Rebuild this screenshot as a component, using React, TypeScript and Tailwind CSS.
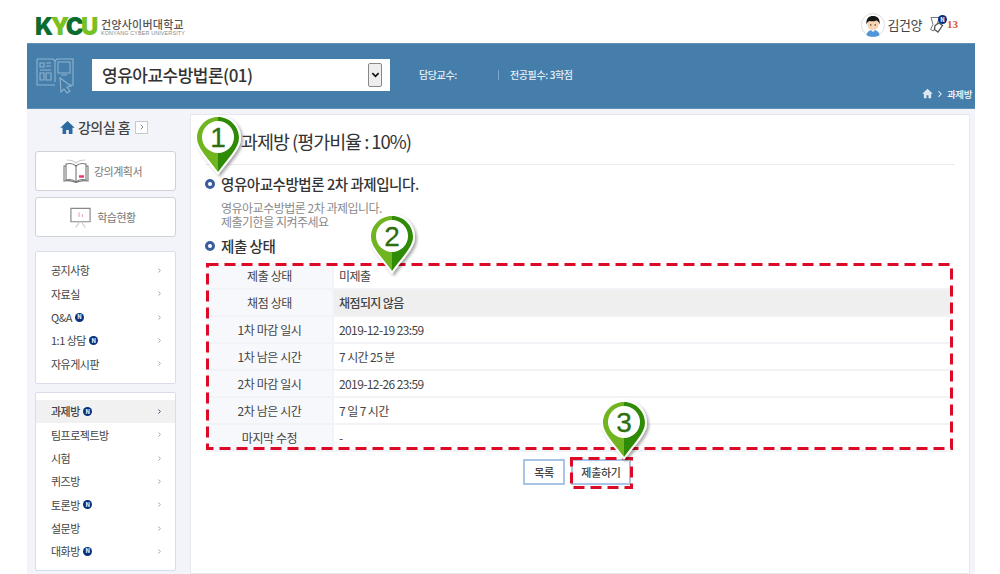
import { ChevronRight } from "lucide-react";

const boardMenu = [
  { label: "공지사항" },
  { label: "자료실" },
  { label: "Q&A", isNew: true },
  { label: "1:1 상담", isNew: true },
  { label: "자유게시판" },
];

const studyMenu = [
  { label: "과제방", isNew: true, active: true },
  { label: "팀프로젝트방" },
  { label: "시험" },
  { label: "퀴즈방" },
  { label: "토론방", isNew: true },
  { label: "설문방" },
  { label: "대화방", isNew: true },
];

const statusRows = [
  { label: "제출 상태", value: "미제출" },
  { label: "채점 상태", value: "채점되지 않음", strong: true },
  { label: "1차 마감 일시", value: "2019-12-19 23:59" },
  { label: "1차 남은 시간", value: "7 시간 25 분" },
  { label: "2차 마감 일시", value: "2019-12-26 23:59" },
  { label: "2차 남은 시간", value: "7 일 7 시간" },
  { label: "마지막 수정", value: "-" },
];

const NewBadge = () => (
  <span className="ml-[3px] flex h-[9px] w-[9px] items-center justify-center rounded-full bg-[#0b2f7d] text-[6px] leading-none font-bold text-white">
    N
  </span>
);

const HomeIcon = ({ className }: { className: string }) => (
  <svg viewBox="0 0 16 16" className={className} fill="currentColor">
    <path d="M8 1 0.3 8.2h2.4V15h3.9v-4.4h2.8V15h3.900V8.200h2.400z" />
  </svg>
);

// map pin used for the numbered callouts
const Pin = ({ n, id, className }: { n: number; id: string; className: string }) => (
  <svg viewBox="0 0 52 66" className={`absolute z-20 h-[66px] w-[52px] ${className}`}>
    <defs>
      <filter id={id} x="-20%" y="-20%" width="150%" height="150%">
        <feDropShadow dx="2" dy="2" stdDeviation="1.5" floodColor="#000" floodOpacity="0.35" />
      </filter>
    </defs>
    <path
      d="M25 2C12 2 2 12 2 25c0 11 12 22 23 37C36 47 48 36 48 25 48 12 38 2 25 2z"
      fill="#fff"
      filter={`url(#${id})`}
    />
    <path d="M25 4C13.4 4 4 13.4 4 25c0 10 11 20 21 34z" fill="#70b51f" />
    <path d="M25 4c11.6 0 21 9.4 21 21 0 10-11 20-21 34z" fill="#2f8a05" />
    <circle cx="25" cy="24" r="16" fill="#fff" />
    <text
      x="25"
      y="34"
      textAnchor="middle"
      fontSize="28"
      fontFamily="Liberation Sans, sans-serif"
      fill="#2d6f10"
      stroke="#2d6f10"
      strokeWidth="0.3"
    >
      {n}
    </text>
  </svg>
);

// red annotation frame
const DashedBox = ({ className, w, h }: { className: string; w: number; h: number }) => (
  <svg className={`pointer-events-none absolute z-10 ${className}`} width={w} height={h}>
    <rect
      x="1.5"
      y="1.5"
      width={w - 3}
      height={h - 3}
      fill="none"
      stroke="#dc0a26"
      strokeWidth="3"
      strokeDasharray="11 6"
    />
  </svg>
);

const MenuBox = ({
  items,
  className,
}: {
  items: { label: string; isNew?: boolean; active?: boolean }[];
  className: string;
}) => (
  <ul className={`rounded-[2px] border border-[#d9dde8] bg-white ${className}`}>
    {items.map((item) => (
      <li
        key={item.label}
        className={`flex h-[23.3px] items-center pr-[12px] pl-[15px] text-[11px] tracking-[-0.5px] text-[#444] ${
          item.active ? "bg-[#f1f1f1] font-medium" : ""
        }`}
      >
        <span>{item.label}</span>
        {item.isNew && <NewBadge />}
        <ChevronRight
          className={`ml-auto h-[7px] w-[7px] ${item.active ? "text-[#25406f]" : "text-[#999]"}`}
          strokeWidth={3}
        />
      </li>
    ))}
  </ul>
);

const SideButton = ({ label, children }: { label: string; children: React.ReactNode }) => (
  <div className="flex h-[40px] items-center justify-center gap-[5px] rounded-[3px] border border-[#cfd2d8] bg-white pr-[6px] text-[11px] tracking-[-0.5px] text-[#777]">
    {children}
    <span>{label}</span>
  </div>
);

export default function App() {
  return (
    <div className="relative h-[574px] w-[1000px] overflow-hidden bg-white font-['Noto_Sans_CJK_KR',sans-serif] text-[#333]">
      <div className="ml-[27px] w-[948px]">
        {/* top header */}
        <header className="flex h-[43px] items-center pt-[6px] pr-[17px] pl-[8px]">
          <div className="mt-[5px] flex items-center gap-[5px]">
            <div className="font-['Inter',sans-serif] text-[24px] leading-none font-black tracking-[-2.5px]">
              <span className="text-[#0b6b30]">K</span>
              <span className="text-[#79c11f]">Y</span>
              <span className="text-[#0b6b30]">C</span>
              <span className="text-[#79c11f]">U</span>
            </div>
            <div className="flex flex-col">
              <span className="text-[11px] leading-[12px] font-medium tracking-[0.25px] text-[#555]">건양사이버대학교</span>
              <span className="font-['Liberation_Sans',sans-serif] text-[5.4px] leading-[7px] tracking-[0.15px] text-[#888]">
                KONYANG CYBER UNIVERSITY
              </span>
            </div>
          </div>
          <div className="ml-auto flex items-center">
            <svg viewBox="0 0 24 24" className="h-[24px] w-[24px]">
              <circle cx="12" cy="12" r="11.5" fill="#fff" stroke="#ddd" />
              <path d="M5.500 22c.5-3.500 3-5 6.500-5s6 1.500 6.500 5c-2 1.500-4 1.800-6.500 1.800S7.500 23.500 5.500 22z" fill="#4f97d8" />
              <path d="M10 17l2 2 2-2z" fill="#fff" />
              <circle cx="12" cy="11.500" r="5.800" fill="#f8d5b4" />
              <path d="M5.500 11.500C4.500 5.500 8 3 12 3s7.500 2.500 6.500 8.500c-.5-2-1.500-3.500-3-4-2 1-5.500 1-7 .5-1.500.5-2.500 1.500-3 3.500z" fill="#161616" />
              <circle cx="9.800" cy="12" r="0.700" fill="#222" />
              <circle cx="14.200" cy="12" r="0.700" fill="#222" />
            </svg>
            <span className="ml-[3px] text-[13px] tracking-[-0.5px] text-[#444]">김건양</span>
            <div className="relative ml-[7px] h-[17px] w-[16px]">
              <svg viewBox="0 0 16 17" className="h-[17px] w-[16px]" fill="none" stroke="#777" strokeWidth="1">
                <path d="M2 1.500h8.500L8 8l-3.500 7-3-1.500 2.500-5z" />
                <path d="M6 9.500l4-2.500 3.500 2.500-4.500 6.500-3.500-2.500z" fill="#fff" stroke="#555" strokeWidth="1.300" />
              </svg>
              <span className="absolute -top-[1px] -right-[2px]">
                <NewBadge />
              </span>
            </div>
            <span className="ml-[2px] font-['Liberation_Serif',serif] text-[11px] font-bold text-[#e2503a]">13</span>
          </div>
        </header>

        {/* course bar */}
        <div className="relative flex h-[66px] items-center border-y border-[#5f92ba] bg-[#457eab] pb-[3px] pl-[9px] text-white">
          <svg viewBox="0 0 38 38" className="h-[38px] w-[38px]" fill="none" stroke="#8fb3cf" strokeWidth="1.100">
            <path d="M1 3h16l2 2 2-2h16v26H28M19 5v21M1 3v26h18" />
            <path d="M4 7h4v4H4zM10 7h5M10 10h5M4 14h11M4 17h4v7H4zM10 17h5v7h-5zM22 6h12v11H22zM25 19h6" />
            <path d="M24 22l11 8-4 1 3 4-3 2-3-4-3 3z" fill="#457eab" />
          </svg>
          <div className="ml-[18px] flex h-[32px] w-[298px] items-center justify-between bg-white pr-[8px] pl-[10px]">
            <span className="text-[17px] font-medium tracking-[-0.5px] text-[#333]">영유아교수방법론(01)</span>
            <span className="flex h-[24px] w-[14px] items-center justify-center rounded-[2px] border border-[#888] bg-[#eee]">
              <svg viewBox="0 0 10 10" className="h-[9px] w-[9px]" fill="none" stroke="#111" strokeWidth="1.800">
                <path d="M1.500 3.500 5 7l3.500-3.500" />
              </svg>
            </span>
          </div>
          <span className="ml-[29px] w-[79px] text-[10px] font-medium tracking-[-0.4px] text-[#e8f0f6]">담당교수:</span>
          <span className="h-[10px] w-px bg-[#7fa6c6]" />
          <span className="ml-[11px] text-[10px] font-medium tracking-[-0.4px] text-[#e8f0f6]">전공필수: 3학점</span>
          <div className="absolute right-[3px] bottom-[7px] flex items-center text-[9.500px] font-medium tracking-[-0.4px]">
            <HomeIcon className="h-[11px] w-[11px] text-[#dbe9f4]" />
            <ChevronRight className="mx-[2px] h-[10px] w-[10px]" strokeWidth={2.500} />
            <span>과제방</span>
          </div>
        </div>

        <div className="flex h-[465px] items-start bg-[#f2f4f9]">
          {/* sidebar */}
          <aside className="w-[163px] pt-[7px] pr-[14px] pl-[8px]">
            <div className="flex h-[22px] items-center justify-center">
              <HomeIcon className="-ml-[3px] h-[15px] w-[15px] text-[#2d6a9f]" />
              <span className="ml-[3px] text-[14px] font-medium tracking-[-0.5px] text-[#444]">강의실 홈</span>
              <span className="ml-[5px] flex h-[13px] w-[13px] items-center justify-center border border-[#c5c9d0] bg-white">
                <ChevronRight className="h-[8px] w-[8px] text-[#888]" strokeWidth={3} />
              </span>
            </div>
            <div className="mt-[13px] flex flex-col gap-[6px]">
              <SideButton label="강의계획서">
                <svg viewBox="0 0 26 26" className="h-[26px] w-[26px]" fill="none" stroke="#777" strokeWidth="1.100">
                  <path d="M4 2c4 0 7 1 9 3 2-2 5-3 9-3" stroke="#ccc" />
                  <path d="M3 6c4-1 8 0 10 2 2-2 6-3 10-2v16c-4-1-8 0-10 2-2-2-6-3-10-2z" />
                  <path d="M3 8H1v15c3-.5 8-.5 12 1.500 4-2 9-2 12-1.500V8h-2M13 8v16" />
                  <path d="M16 18.500h5" stroke="#ee3b6b" strokeWidth="2.500" />
                </svg>
              </SideButton>
              <SideButton label="학습현황">
                <svg viewBox="0 0 24 24" className="h-[24px] w-[23px]" fill="none" stroke="#888" strokeWidth="1.200">
                  <path d="M2 3h20v14H2z" />
                  <path d="M7 23l4-6M17 23l-4-6" stroke="#ccc" />
                  <path d="M10.500 7v5M14 9v3" stroke="#f4a6b8" />
                </svg>
              </SideButton>
            </div>
            <MenuBox items={boardMenu} className="mt-[14px] h-[133px] w-[141px] pt-[7px]" />
            <MenuBox items={studyMenu} className="mt-[8px] h-[179px] w-[141px] pt-[7px]" />
          </aside>

          {/* content panel */}
          <main className="mt-[5px] h-[460px] w-[780px] border border-[#e6e8ef] bg-white pr-[14px] pl-[14px]">
            <h1 className="flex h-[50px] items-center border-b border-[#e9ebf0] pt-[5px] pl-[36px] text-[18.5px] font-normal tracking-[-1.05px] text-[#333]">
              과제방 (평가비율 : 10%)
            </h1>
            <h2 className="mt-[9px] flex items-center text-[14.5px] leading-[20px] font-medium tracking-[-0.45px] text-[#333]">
              <span className="mr-[6px] h-[10px] w-[10px] rounded-full border-[3px] border-[#3b5d9b]" />
              영유아교수방법론 2차 과제입니다.
            </h2>
            <p className="mt-[7px] pl-[16px] text-[12px] leading-[14px] tracking-[-0.5px] text-[#8a8a8a]">
              영유아교수방법론 2차 과제입니다.
              <br />
              제출기한을 지켜주세요
            </p>
            <h2 className="mt-[7px] flex items-center text-[14.5px] leading-[20px] font-medium tracking-[-0.45px] text-[#333]">
              <span className="mr-[6px] h-[10px] w-[10px] rounded-full border-[3px] border-[#3b5d9b]" />
              제출 상태
            </h2>
            <table className="mt-[7px] ml-[2px] w-[745px] border-separate border-spacing-0 text-[12px] tracking-[-0.4px] text-[#444]">
              <tbody>
                {statusRows.map((row) => (
                  <tr key={row.label} className="h-[27px]">
                    <td className="w-[127px] border-r-2 border-b-2 border-[#f2f3f7] bg-[#f7f8fc] text-center">{row.label}</td>
                    <td className={`border-b-2 border-[#f2f3f7] pl-[5px] tracking-[-0.6px] ${row.strong ? "bg-[#efefef] font-medium" : ""}`}>
                      {row.value}
                    </td>
                  </tr>
                ))}
              </tbody>
            </table>
            <div className="mt-[7px] flex justify-center gap-[6px] pr-[6px] text-[11px] font-medium tracking-[-0.3px] text-[#444]">
              <button className="h-[26px] w-[42px] border-2 border-[#a9c4e6] bg-white">목록</button>
              <button className="h-[26px] w-[60px] border-2 border-[#a9c4e6] bg-white">제출하기</button>
            </div>
          </main>
        </div>
      </div>

      {/* annotations */}
      <DashedBox className="top-[263px] left-[206px]" w={747} h={187} />
      <DashedBox className="top-[457px] left-[570px]" w={63} h={32} />
      <Pin n={1} id="pin1" className="top-[113px] left-[193px]" />
      <Pin n={2} id="pin2" className="top-[212px] left-[367px]" />
      <Pin n={3} id="pin3" className="top-[398px] left-[599px]" />
    </div>
  );
}
